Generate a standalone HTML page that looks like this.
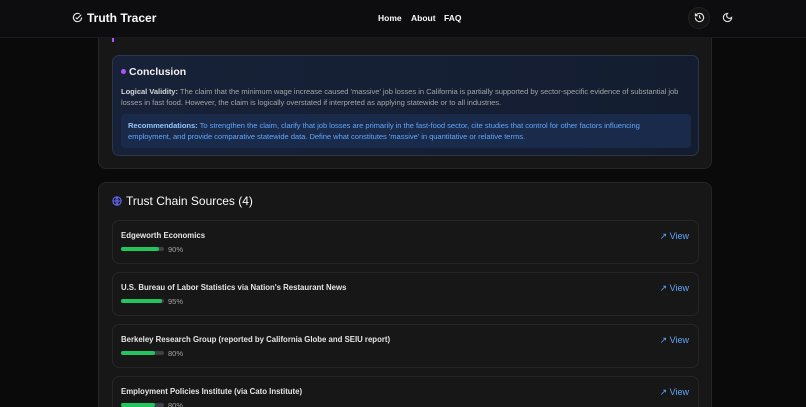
<!DOCTYPE html>
<html><head><meta charset="utf-8"><style>
*{margin:0;padding:0;box-sizing:border-box}
html,body{width:806px;height:407px;overflow:hidden}
body{background:#0a0a0a;font-family:"Liberation Sans",sans-serif;color:#e5e5e5;position:relative}
.hdr{position:absolute;left:0;top:0;width:806px;height:38px;background:#0d0d0f;border-bottom:1px solid #1a1a1a;z-index:5}
.card{position:absolute;left:98px;width:614px;background:#171717;border:1px solid #262626;border-radius:8px}
.concl{position:absolute;left:112px;top:55px;width:587px;height:101px;border:1px solid #2a3550;border-radius:7px;background:linear-gradient(90deg,#172238,#141d30)}
.src{position:absolute;left:112px;width:587px;height:44px;border:1px solid #262626;border-radius:7px;background:#171717}
.src .n{position:absolute;left:8px;top:10px;font-size:7.8px;font-weight:bold;color:#e5e5e5}
.src .bar{position:absolute;left:8px;top:26px;width:43px;height:4px;border-radius:2px;background:#3f3f46}
.src .bar i{display:block;height:4px;border-radius:2px;background:#22c55e}
.src .p{position:absolute;left:55px;top:24px;font-size:7.5px;color:#a3a3a3}
.src .v{position:absolute;right:9px;top:10px;font-size:9px;color:#60a5fa}
</style></head><body>
<div class="hdr">
<svg style="position:absolute;left:72px;top:12px" width="11" height="11" viewBox="0 0 24 24" fill="none" stroke="#e5e5e5" stroke-width="2.4"><path d="M21 12a9 9 0 1 1-4-7.5"/><path d="M8 12l3 3 9-9"/></svg>
<div style="position:absolute;left:87px;top:11px;font-size:12px;font-weight:bold;color:#fafafa">Truth Tracer</div>
<div style="position:absolute;left:378px;top:13px;font-size:8.5px;font-weight:bold;color:#fafafa">Home</div>
<div style="position:absolute;left:411px;top:13px;font-size:8.5px;font-weight:bold;color:#fafafa">About</div>
<div style="position:absolute;left:444px;top:13px;font-size:8.5px;font-weight:bold;color:#fafafa">FAQ</div>
<div style="position:absolute;left:688px;top:7px;width:22px;height:22px;border-radius:11px;background:#141414;border:1px solid #222"></div>
<svg style="position:absolute;left:694px;top:12px" width="11" height="11" viewBox="0 0 24 24" fill="none" stroke="#e5e5e5" stroke-width="2.4"><path d="M3 12a9 9 0 1 0 3-6.7L3 8"/><path d="M3 3v5h5"/><path d="M12 7v5l3 2"/></svg>
<svg style="position:absolute;left:722px;top:12px" width="11" height="11" viewBox="0 0 24 24" fill="none" stroke="#e5e5e5" stroke-width="2.4"><path d="M12 3a6 6 0 0 0 9 9 9 9 0 1 1-9-9z"/></svg>
</div>
<div class="card" style="top:-20px;height:189px"></div>
<div style="position:absolute;left:112px;top:38px;width:2px;height:4px;background:#a855f7"></div>
<div class="concl">
<div style="position:absolute;left:8px;top:13px;width:5px;height:5px;border-radius:3px;background:#a855f7"></div>
<div style="position:absolute;left:16px;top:10px;font-size:10.5px;font-weight:bold;color:#f0f0f0">Conclusion</div>
<div style="position:absolute;left:8px;top:30px;width:575px;font-size:7.6px;line-height:11px;color:#a3a3a3;letter-spacing:-0.05px"><b style="color:#d4d4d4">Logical Validity:</b> The claim that the minimum wage increase caused 'massive' job losses in California is partially supported by sector-specific evidence of substantial job losses in fast food. However, the claim is logically overstated if interpreted as applying statewide or to all industries.</div>
<div style="position:absolute;left:8px;top:58px;width:570px;height:34px;background:#1a2a4a;border-radius:4px;padding:6px 7px;font-size:7.6px;line-height:11px;color:#60a5fa;letter-spacing:-0.05px"><b style="color:#93c5fd">Recommendations:</b> To strengthen the claim, clarify that job losses are primarily in the fast-food sector, cite studies that control for other factors influencing employment, and provide comparative statewide data. Define what constitutes 'massive' in quantitative or relative terms.</div>
</div>
<div class="card" style="top:182px;height:240px"></div>
<svg style="position:absolute;left:112px;top:196px" width="10" height="10" viewBox="0 0 24 24" fill="none" stroke="#6366f1" stroke-width="2.6"><circle cx="12" cy="12" r="10"/><path d="M2 12h20M12 2c3 3 3 17 0 20M12 2c-3 3-3 17 0 20"/></svg>
<div style="position:absolute;left:126px;top:194px;font-size:12px;color:#fafafa">Trust Chain Sources (4)</div>
<div class="src" style="top:220px"><div class="n">Edgeworth Economics</div><div class="bar"><i style="width:38px"></i></div><div class="p">90%</div><div class="v">&#x2197;&#xFE0E; View</div></div>
<div class="src" style="top:272px"><div class="n">U.S. Bureau of Labor Statistics via Nation's Restaurant News</div><div class="bar"><i style="width:41px"></i></div><div class="p">95%</div><div class="v">&#x2197;&#xFE0E; View</div></div>
<div class="src" style="top:324px"><div class="n">Berkeley Research Group (reported by California Globe and SEIU report)</div><div class="bar"><i style="width:34px"></i></div><div class="p">80%</div><div class="v">&#x2197;&#xFE0E; View</div></div>
<div class="src" style="top:376px"><div class="n">Employment Policies Institute (via Cato Institute)</div><div class="bar"><i style="width:34px"></i></div><div class="p">80%</div><div class="v">&#x2197;&#xFE0E; View</div></div>
</body></html>
